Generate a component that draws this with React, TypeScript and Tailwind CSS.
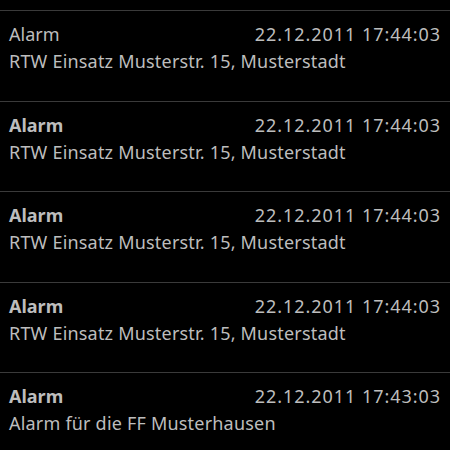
const items = [
  { title: 'Alarm', bold: false, time: '22.12.2011 17:44:03', text: 'RTW Einsatz Musterstr. 15, Musterstadt' },
  { title: 'Alarm', bold: true, time: '22.12.2011 17:44:03', text: 'RTW Einsatz Musterstr. 15, Musterstadt' },
  { title: 'Alarm', bold: true, time: '22.12.2011 17:44:03', text: 'RTW Einsatz Musterstr. 15, Musterstadt' },
  { title: 'Alarm', bold: true, time: '22.12.2011 17:44:03', text: 'RTW Einsatz Musterstr. 15, Musterstadt' },
  { title: 'Alarm', bold: true, time: '22.12.2011 17:43:03', text: 'Alarm für die FF Musterhausen' },
];

export default function App() {
  return (
    <div className="w-[450px] h-[450px] overflow-hidden bg-black text-[#bdbdbd] font-['Noto_Sans',sans-serif] text-[18px] leading-[27px]">
      {/* tail of the previous entry, scrolled off */}
      <div className="h-[10px]" />
      {items.map((it, i) => (
        <div
          key={i}
          className={`border-t border-[#3a3a3a] pl-[9px] pr-[10px] pt-[10px] ${i % 2 === 0 ? 'h-[91px]' : 'h-[90px]'}`}
        >
          <div className="flex justify-between">
            <span className={it.bold ? 'font-bold' : ''}>{it.title}</span>
            <span className="tracking-[0.95px] mr-[-1px]">{it.time}</span>
          </div>
          <div className="tracking-[0.2px]">{it.text}</div>
        </div>
      ))}
    </div>
  );
}
